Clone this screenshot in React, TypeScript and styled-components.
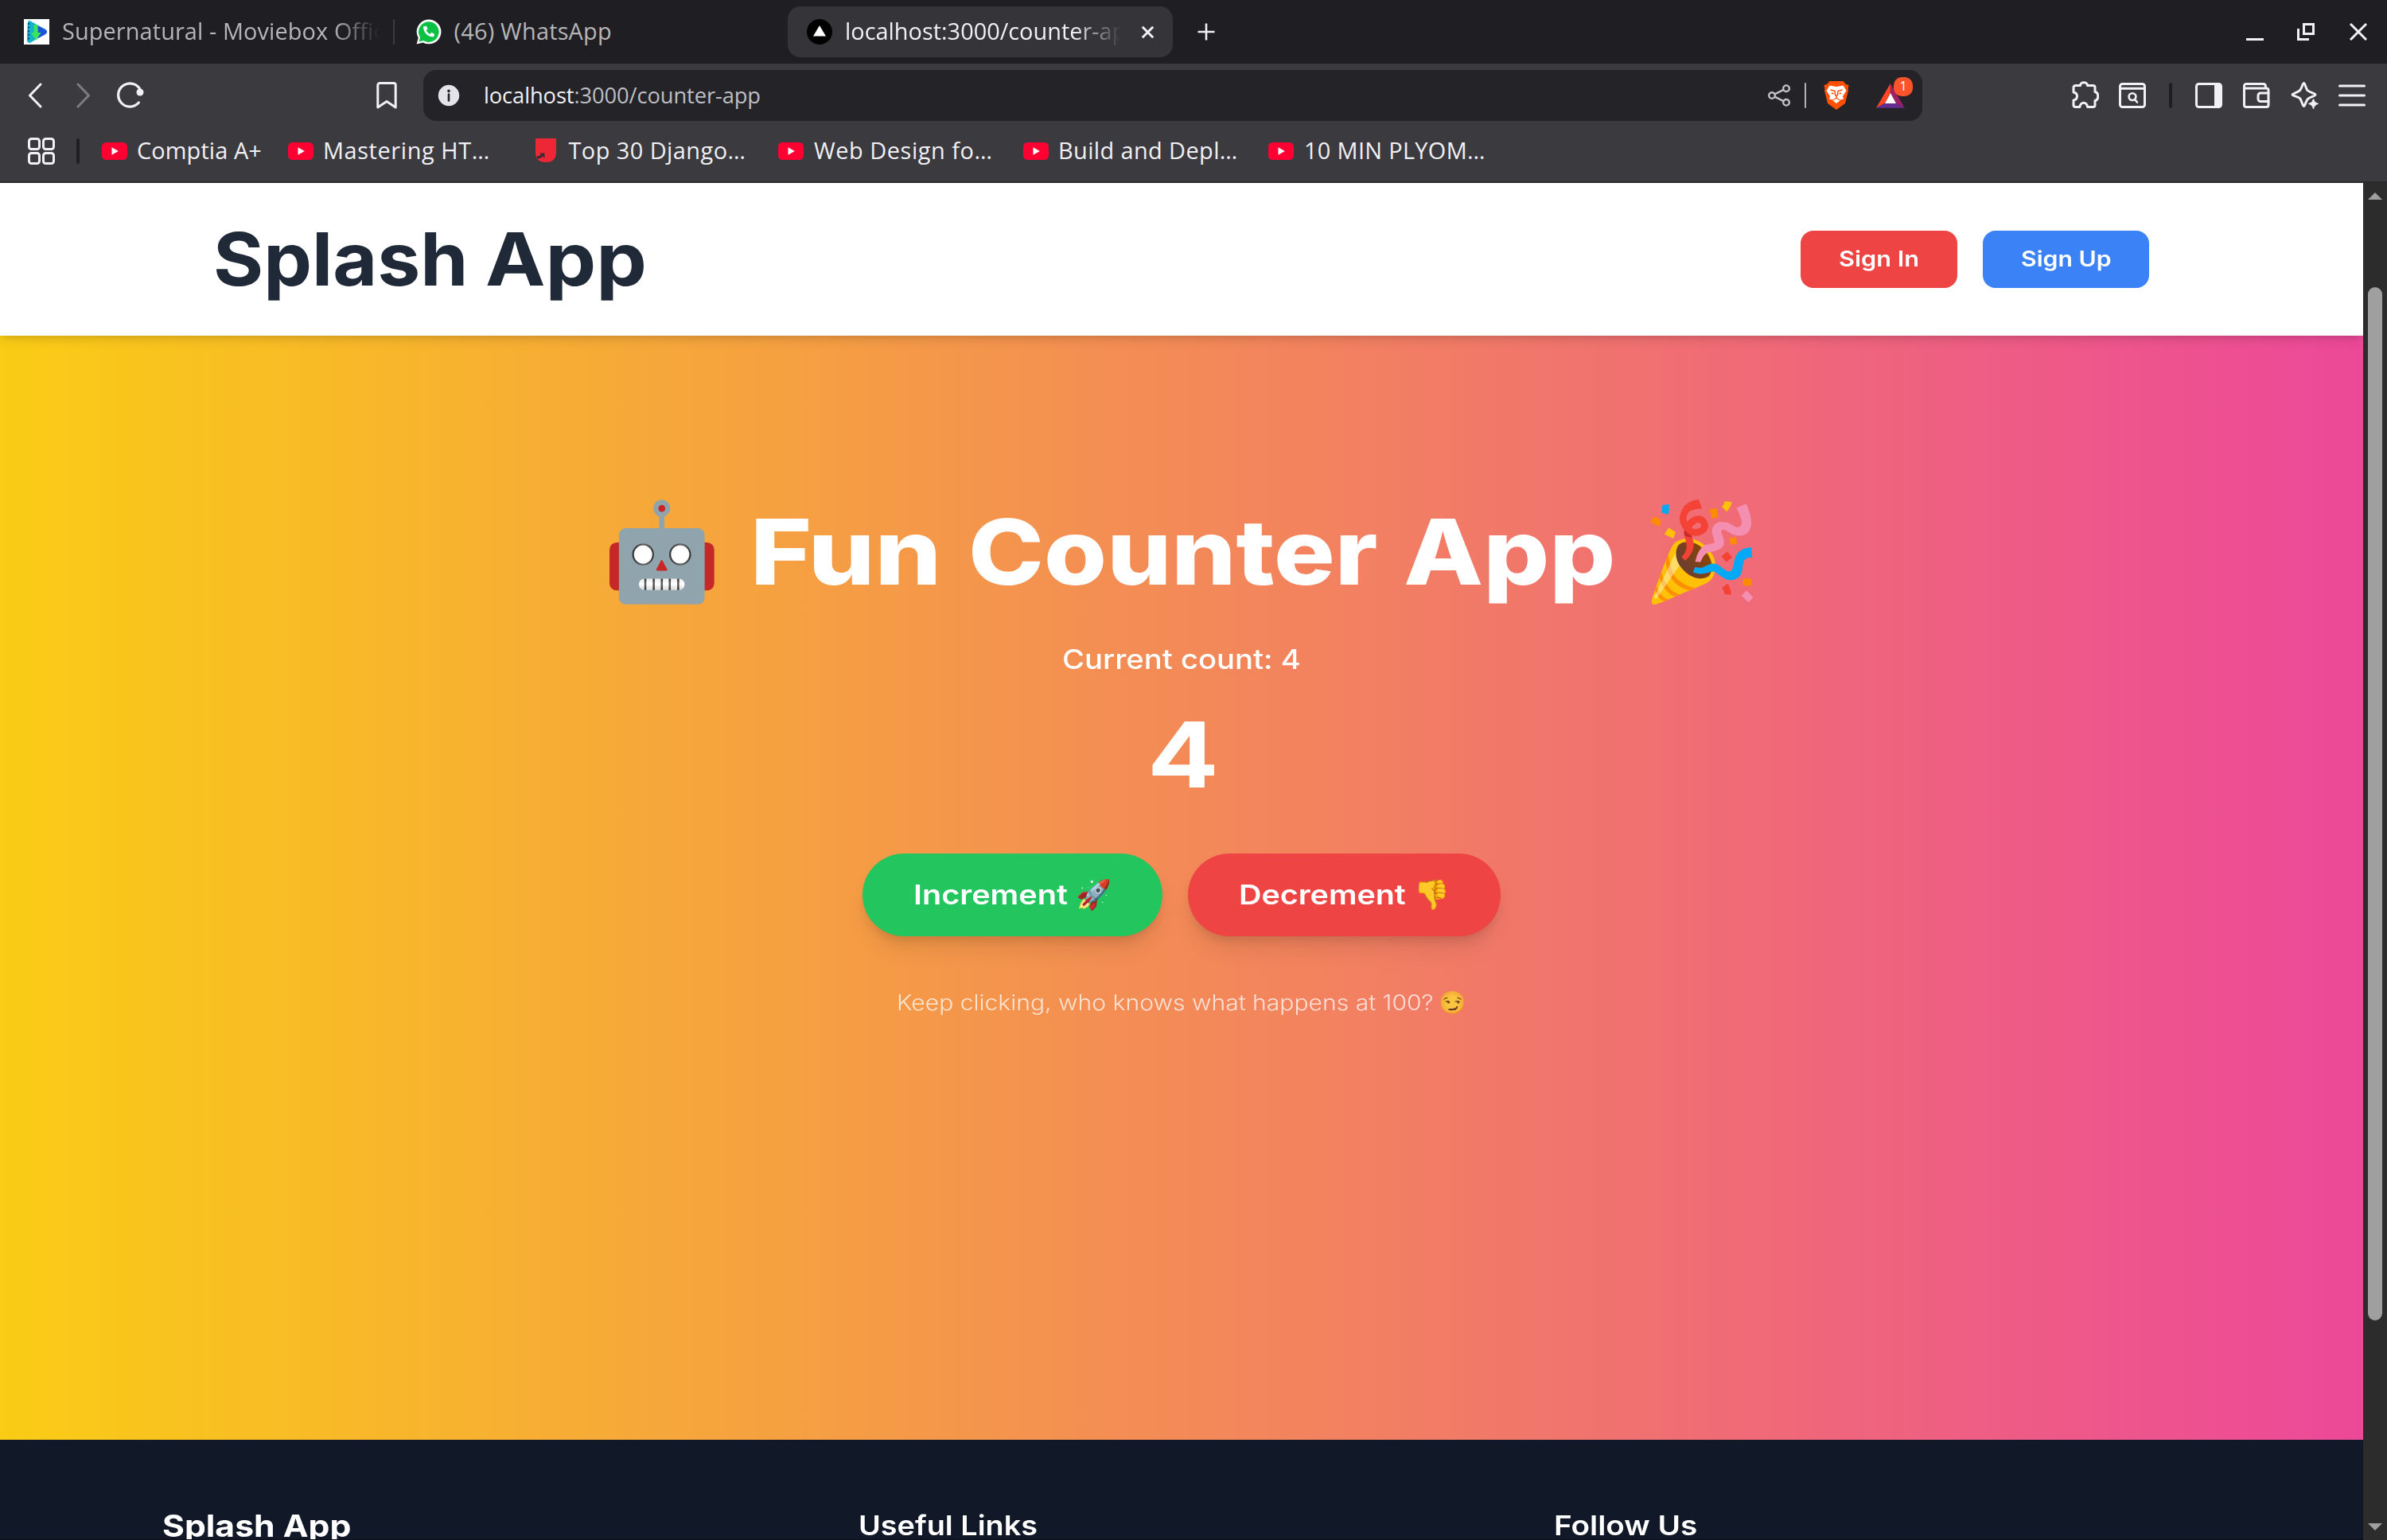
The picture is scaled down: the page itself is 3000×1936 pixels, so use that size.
import React, { useState } from "react";
import styled, { createGlobalStyle } from "styled-components";
import { FaPhoneAlt } from "react-icons/fa";

const Global = createGlobalStyle`
  *, *::before, *::after { box-sizing: border-box; }
  body { margin: 0; overflow: hidden; }
  button { border: 0; padding: 0; margin: 0; background: none; font: inherit; color: inherit; }
  h1, h2, h3, p { margin: 0; font-weight: inherit; }
  svg { display: block; flex-shrink: 0; }
`;

const INK = "#f1f0f5";

const Window = styled.div`
  width: 3000px;
  height: 1936px;
  display: flex;
  flex-direction: column;
  overflow: hidden;
  background: #3b3a3f;
  color: ${INK};
  font-family: "Open Sans", "Noto Sans", sans-serif;
`;

/* ---------- tab strip ---------- */

const TabStrip = styled.div`
  height: 80px;
  flex-shrink: 0;
  display: flex;
  align-items: center;
  background: #1f1e23;
`;

const Tab = styled.div<{ $width: number; $active?: boolean; $pad?: number }>`
  width: ${(p) => p.$width}px;
  height: 64px;
  display: flex;
  align-items: center;
  padding-left: ${(p) => p.$pad ?? 24}px;
  border-radius: 16px;
  background: ${(p) => (p.$active ? "#353439" : "transparent")};
  color: ${(p) => (p.$active ? "#f1f0f5" : "#b6b5b9")};
`;

const Leading = styled.div<{ $width: number }>`
  width: ${(p) => p.$width}px;
`;

const TabTitle = styled.span<{ $width: number; $fade?: number; $spacing?: number }>`
  width: ${(p) => p.$width}px;
  margin: 0 0 2px 16px;
  overflow: hidden;
  white-space: nowrap;
  font-size: 28.9px;
  line-height: 48px;
  letter-spacing: ${(p) => p.$spacing ?? 0}px;
  ${(p) => p.$fade && `mask-image: linear-gradient(90deg, #000 calc(100% - ${p.$fade}px), transparent);`}
`;

const TabDivider = styled.i`
  width: 2px;
  height: 32px;
  background: #3b3a3f;
`;

const IconButton = styled.button<{ $ml?: number; $mt?: number }>`
  display: flex;
  flex-shrink: 0;
  margin-left: ${(p) => p.$ml ?? 0}px;
  margin-top: ${(p) => p.$mt ?? 0}px;
`;

const WindowControls = styled.div`
  display: flex;
  align-items: center;
  margin-left: auto;
  padding-right: 25px;
`;

/* ---------- toolbar ---------- */

const Toolbar = styled.div`
  height: 80px;
  flex-shrink: 0;
  display: flex;
  align-items: center;
  padding: 0 27px 0 35px;
`;

const AddressBar = styled.div`
  width: 1884px;
  height: 64px;
  margin-left: 33px;
  padding: 0 22px 0 18px;
  display: flex;
  align-items: center;
  border-radius: 16px;
  background: #242328;
`;

const Url = styled.span`
  flex: 1;
  margin-left: 30px;
  font-size: 27.3px;
  line-height: 40px;
  letter-spacing: -0.1px;
  color: #bfbec4;
  b { font-weight: 400; color: ${INK}; }
`;

const Rule = styled.i<{ $ml: number; $width?: number; $color?: string }>`
  width: ${(p) => p.$width ?? 4}px;
  height: 32px;
  flex-shrink: 0;
  margin-left: ${(p) => p.$ml}px;
  border-radius: 2px;
  background: ${(p) => p.$color ?? "#1f1e23"};
`;

const Rewards = styled.div`
  position: relative;
  display: flex;
  margin-left: 34px;
`;

const Badge = styled.span`
  position: absolute;
  left: 22px;
  top: -8px;
  width: 24px;
  height: 24px;
  border-radius: 10px;
  background: #fb542b;
  color: #fff;
  text-align: center;
  font: 400 16px/23px "Open Sans", sans-serif;
`;

const ToolbarEnd = styled.div`
  display: flex;
  align-items: center;
  margin-left: auto;
`;

/* ---------- bookmarks ---------- */

const Bookmarks = styled.div`
  height: 70px;
  flex-shrink: 0;
  display: flex;
  align-items: center;
  padding: 0 0 8px 35px;
  border-bottom: 2px solid #2a292e;
`;

const BookmarkList = styled.div`
  display: flex;
  margin-left: 28px;
`;

const BookmarkItem = styled.a<{ $width: number }>`
  width: ${(p) => p.$width}px;
  display: flex;
  align-items: center;
`;

const BookmarkLabel = styled.span<{ $spacing: number; $indent: number }>`
  margin: 0 0 2px ${(p) => p.$indent}px;
  white-space: nowrap;
  font-size: 28.9px;
  line-height: 40px;
  letter-spacing: ${(p) => p.$spacing}px;
`;

/* ---------- page ---------- */

const Viewport = styled.div`
  flex: 1;
  min-height: 0;
  display: flex;
`;

const Page = styled.div`
  width: 2970px;
  overflow: hidden;
  display: flex;
  flex-direction: column;
  font-family: Inter, "Open Sans", sans-serif;
  color: #fff;
`;

const Wide = styled.span<{ $size: number; $weight: number; $width: number; $scale: number; $line: number }>`
  display: block;
  flex-shrink: 0;
  width: ${(p) => p.$width}px;
  white-space: nowrap;
  font-size: ${(p) => p.$size}px;
  font-weight: ${(p) => p.$weight};
  line-height: ${(p) => p.$line}px;
  transform: scaleX(${(p) => p.$scale});
  transform-origin: 0 50%;
`;

const Emoji = styled.span<{ $size: number; $line: number; $ml?: number }>`
  display: block;
  flex-shrink: 0;
  width: ${(p) => p.$size * 1.245}px;
  margin-left: ${(p) => p.$ml ?? 0}px;
  font-size: ${(p) => p.$size}px;
  line-height: ${(p) => p.$line}px;
  font-weight: 400;
  white-space: nowrap;
`;

const Header = styled.header`
  position: relative;
  height: 192px;
  flex-shrink: 0;
  display: flex;
  align-items: center;
  justify-content: space-between;
  padding: 0 269px 0 268px;
  background: #fff;
  color: #1f2937;
  box-shadow: 0 8px 12px -2px rgba(0, 0, 0, 0.1), 0 4px 8px -4px rgba(0, 0, 0, 0.1);
`;

const Brand = styled.h2`
  display: flex;
  gap: 24px;
`;

const AuthButtons = styled.div`
  display: flex;
  gap: 31.6px;
`;

const AuthButton = styled.button<{ $tone: string }>`
  height: 72px;
  display: flex;
  align-items: center;
  padding: 0 48px 2px;
  border-radius: 16px;
  background: ${(p) => p.$tone};
  color: #fff;
  text-align: left;
`;

const Hero = styled.main`
  height: 1388px;
  flex-shrink: 0;
  display: flex;
  flex-direction: column;
  align-items: center;
  padding-top: 210px;
  background: linear-gradient(90deg, #facc15, #ec4899);
`;

const Line = styled.div<{ $height: number; $mt?: number; $opacity?: number }>`
  display: flex;
  align-items: baseline;
  height: ${(p) => p.$height}px;
  margin-top: ${(p) => p.$mt ?? 0}px;
  opacity: ${(p) => p.$opacity ?? 1};
`;

const HeadingText = styled.span`
  display: flex;
  gap: 33.3px;
  margin: 0 33px 0 36.2px;
`;

const Actions = styled.div`
  display: flex;
  gap: 32px;
  margin-top: 64px;
`;

const CountButton = styled.button<{ $tone: string }>`
  height: 104px;
  display: flex;
  align-items: center;
  padding: 0 64px 3px;
  border-radius: 52px;
  background: ${(p) => p.$tone};
  color: #fff;
  text-align: left;
  box-shadow: 0 20px 30px -6px rgba(0, 0, 0, 0.1), 0 8px 12px -4px rgba(0, 0, 0, 0.1);
`;

const Footer = styled.footer`
  flex: 1;
  min-height: 0;
  display: grid;
  grid-template-columns: 875px 874px 874px;
  padding: 80px 0 0 204px;
  overflow: hidden;
  background: #111827;
  border-bottom: 1px solid #0c0f1a;
`;

const Scrollbar = styled.div`
  width: 30px;
  display: flex;
  flex-direction: column;
  align-items: center;
  background: #2c2c2c;
`;

const ScrollArrow = styled.i<{ $down?: boolean }>`
  margin: ${(p) => (p.$down ? "auto 0 12px" : "12px 0 0")};
  border: 9px solid transparent;
  border-top-width: ${(p) => (p.$down ? 9 : 0)}px;
  border-bottom-width: ${(p) => (p.$down ? 0 : 9)}px;
  ${(p) => (p.$down ? "border-top-color" : "border-bottom-color")}: #9f9f9f;
`;

const Thumb = styled.i`
  width: 18px;
  height: 1299px;
  margin-top: 110px;
  border-radius: 9px;
  background: #9f9f9f;
`;

/* ---------- drawings ---------- */

const stroke = { fill: "none", stroke: INK, strokeWidth: 3, strokeLinecap: "round", strokeLinejoin: "round" } as const;

const MovieIcon = () => (
  <svg width="32" height="32" viewBox="0 0 32 32">
    <rect width="32" height="32" fill="#fff" />
    <path d="M5 4Q6 1 9 3L27 13Q31 16 27 19L9 29Q5 31 4 27Z" fill="#1b9fd8" />
    <path d="M17 8L27 13Q31 16 27 19L18 24Z" fill="#1a56d6" />
    <path d="M5 4Q6 1 9 3L12 5V27L9 29Q5 31 4 27Z" fill="#12b3c9" />
    <path d="M6 5V27" stroke="#0a3f7a" strokeWidth="2" strokeDasharray="2 2.6" />
    <path d="M12.5 7H17.5V17H21.5L15 27L9 17H12.5Z" fill="#3be45a" />
  </svg>
);

const WhatsAppIcon = () => (
  <svg width="32" height="32" viewBox="0 0 32 32">
    <path d="M.6 31.5L2.7 23.6A15.4 15.4 0 1 1 8.6 29.4Z" fill="#fff" />
    <path d="M3.6 28.6L5 23A12.8 12.8 0 1 1 9.2 27.1Z" fill="#0bc143" />
    <FaPhoneAlt x="9" y="8.5" size="14" color="#fff" />
  </svg>
);

const NextIcon = () => (
  <svg width="32" height="32" viewBox="0 0 32 32">
    <circle cx="16" cy="16" r="16" fill="#000" />
    <path d="M16 8L24 21.6H8Z" fill="#fff" />
  </svg>
);

const YouTubeIcon = () => (
  <svg width="32" height="32" viewBox="0 0 32 32">
    <rect y="5" width="32" height="22" rx="5.5" fill="#ff0033" />
    <path d="M12.5 11.3V20.7L20.8 16Z" fill="#fff" />
  </svg>
);

const RedBookIcon = () => (
  <svg width="32" height="32" viewBox="0 0 32 32">
    <path d="M3 0H29V17Q29 30 16 30Q3 30 3 17Z" fill="#ee2737" />
    <path d="M5 25Q9 26 12.5 22.5L14.5 25V18.5H8L10 20.6Q8 23 5 22Z" fill="#3b2a30" />
  </svg>
);

const Chevron = ({ right }: { right?: boolean }) => (
  <svg width="18" height="32" viewBox="0 0 18 32">
    <path d={right ? "M2 2L15.5 16L2 30" : "M16 2L2.5 16L16 30"} {...stroke} stroke={right ? "#7d7c81" : INK} />
  </svg>
);

const ReloadIcon = () => (
  <svg width="36" height="34" viewBox="0 0 36 34">
    <path d="M30.6 11.5A14.6 14.6 0 1 0 28.3 27" {...stroke} strokeWidth="3.2" />
    <circle cx="30" cy="14" r="4.5" fill={INK} />
  </svg>
);

const BookmarkIcon = () => (
  <svg width="26" height="34" viewBox="0 0 26 34">
    <path d="M1.8 4A2.4 2.4 0 0 1 4.2 1.6H21.8A2.4 2.4 0 0 1 24.2 4V32L13 24.5L1.8 32Z" {...stroke} />
  </svg>
);

const InfoIcon = () => (
  <svg width="28" height="28" viewBox="0 0 28 28">
    <circle cx="14" cy="14" r="13.2" fill="#e4e3e9" />
    <circle cx="14" cy="8.4" r="1.8" fill="#242328" />
    <path d="M14 12.5V20.5" stroke="#242328" strokeWidth="2.6" strokeLinecap="round" />
  </svg>
);

const ShareIcon = () => (
  <svg width="28" height="28" viewBox="0 0 28 28">
    <g fill="none" stroke="#c3c2c8" strokeWidth="2.4">
      <circle cx="5" cy="14" r="3.8" />
      <circle cx="23" cy="5.2" r="3.8" />
      <circle cx="23" cy="22.8" r="3.8" />
      <path d="M8.5 12.3L19.5 6.9M8.5 15.7L19.5 21.1" />
    </g>
  </svg>
);

const BraveIcon = () => (
  <svg width="32" height="36" viewBox="0 0 32 36">
    <path d="M7.5 0H24.5L28 4L31.5 5L30.5 10L31 12L27 28L16 36L5 28L1 12L1.5 10L.5 5L4 4Z" fill="#ff4f00" />
    <path d="M7.5 5.5L16 7L24.5 5.5L28.5 12L24 19L25 22.5L20.5 23.5L16 20.5L11.5 23.5L7 22.5L8 19L3.5 12Z" fill="#fff" />
    <path d="M8.5 11L14 12.3L14.6 17.6L16 18.8L17.4 17.6L18 12.3L23.5 11M10 15L12.5 16M22 15L19.5 16M16 19V21" fill="none" stroke="#ff4f00" strokeWidth="1.5" />
    <path d="M11.5 24.5L16 22L20.5 24.5L16 28Z" fill="#fff" />
  </svg>
);

const BatIcon = () => (
  <svg width="36" height="31" viewBox="0 0 36 31">
    <path d="M17.8 0V12L11 24.7L0 30.7Z" fill="#ff4724" />
    <path d="M17.8 0L35.8 30.7L25 24.7L17.8 12Z" fill="#9e1f63" />
    <path d="M0 30.7L11 24.7H25L35.8 30.7Z" fill="#662d91" />
    <path d="M18 12L25 24.9H11Z" fill="#fff" />
  </svg>
);

const PuzzleIcon = () => (
  <svg width="34" height="34" viewBox="0 0 34 34">
    <path
      d="M2 14V8A2.5 2.5 0 0 1 4.5 5.5H10.5C10.5.5 19.5.5 19.5 5.5H26.5A2.5 2.5 0 0 1 29 8V13.5C34 14.5 34 23.5 29 24.5V30A2.5 2.5 0 0 1 26.5 32.5H19.5C19 25.5 10.5 25.5 10 32.5H4.5A2.5 2.5 0 0 1 2 30V24C8 23 8 15 2 14Z"
      {...stroke}
    />
  </svg>
);

const FindIcon = () => (
  <svg width="34" height="34" viewBox="0 0 34 34">
    <rect x="1.5" y="2.5" width="31" height="29" rx="3" {...stroke} />
    <path d="M2 8.2H32" {...stroke} />
    <circle cx="17" cy="18.6" r="4.4" {...stroke} strokeWidth="2.6" />
    <path d="M20 22L23 25.5" {...stroke} strokeWidth="2.6" />
  </svg>
);

const SidebarIcon = () => (
  <svg width="34" height="34" viewBox="0 0 34 34">
    <rect x="1.5" y="2.5" width="31" height="29" rx="3" {...stroke} />
    <path d="M24 2.5H31.5V31.5H24Z" fill={INK} />
  </svg>
);

const WalletIcon = () => (
  <svg width="34" height="34" viewBox="0 0 34 34">
    <path d="M1.5 8V5A2.5 2.5 0 0 1 4 2.5H25.5Q28.5 2.5 28.5 6V8M1.5 8H29.5A2.5 2.5 0 0 1 32 10.5V29A2.5 2.5 0 0 1 29.5 31.5H4A2.5 2.5 0 0 1 1.5 29Z" {...stroke} />
    <path d="M32 14H22A3 3 0 0 0 19 17V21.5A3 3 0 0 0 22 24.5H32" {...stroke} />
  </svg>
);

const SparkleIcon = () => (
  <svg width="36" height="36" viewBox="0 0 36 36">
    <path d="M16.5 2.5C18 2.5 18.8 8 20.4 10.8C22.6 14.2 31 15.5 31 17C31 18.6 25.5 19.5 22 22C19 24.2 18 31.5 16.5 31.5C15 31.5 14 25 11.8 22C9.6 19.2 2 18.5 2 17C2 15.4 9.2 14.4 11.6 11.6C14 8.8 15 2.5 16.5 2.5Z" {...stroke} />
    <path d="M28.5 22.5Q29.5 27.5 34.5 28.5Q29.5 29.5 28.5 35Q27.5 29.5 22.5 28.5Q27.5 27.5 28.5 22.5Z" fill={INK} stroke={INK} strokeWidth="1" />
  </svg>
);

const MenuIcon = () => (
  <svg width="34" height="34" viewBox="0 0 34 34">
    <path d="M1.5 5H32.5M1.5 17H32.5M1.5 29H32.5" {...stroke} />
  </svg>
);

const GridIcon = () => (
  <svg width="34" height="34" viewBox="0 0 34 34">
    {[1.5, 19.5].map((x) => [1.5, 19.5].map((y) => <rect key={`${x}-${y}`} x={x} y={y} width="13" height="13" rx="3" {...stroke} />))}
  </svg>
);

const bookmarks = [
  { label: "Comptia A+", width: 234, spacing: 0.1, indent: 12 },
  { label: "Mastering HT…", width: 307.5, spacing: 0.6, indent: 12 },
  { label: "Top 30 Django…", width: 308.5, spacing: 0.45, indent: 13, book: true },
  { label: "Web Design fo…", width: 308, spacing: 0.55, indent: 13 },
  { label: "Build and Depl…", width: 308, spacing: 0.4, indent: 12 },
  { label: "10 MIN PLYOM…", width: 308, spacing: 0.34, indent: 13 },
];

export default function App() {
  const [count, setCount] = useState(4);
  return (
    <>
      <Global />
      <Window>
        <TabStrip>
          <Leading $width={6} />
          <Tab $width={488}>
            <MovieIcon />
            <TabTitle $width={399} $fade={58} $spacing={0.1}>Supernatural - Moviebox Official</TabTitle>
          </Tab>
          <TabDivider />
          <Tab $width={494} $pad={26.5}>
            <WhatsAppIcon />
            <TabTitle $width={300} $spacing={0.2}>(46) WhatsApp</TabTitle>
          </Tab>
          <Tab $width={484} $active>
            <NextIcon />
            <TabTitle $width={347} $fade={60}>localhost:3000/counter-app</TabTitle>
            <IconButton $ml={25}>
              <svg width="17" height="17" viewBox="0 0 17 17"><path d="M1.8 1.8L15.2 15.2M15.2 1.8L1.8 15.2" {...stroke} strokeLinecap="butt" /></svg>
            </IconButton>
          </Tab>
          <IconButton $ml={31}>
            <svg width="22" height="22" viewBox="0 0 22 22"><path d="M11 .5V21.5M.5 11H21.5" {...stroke} strokeWidth="2.6" strokeLinecap="butt" /></svg>
          </IconButton>
          <WindowControls>
            <svg width="22" height="22" viewBox="0 0 22 22"><path d="M0 20.5H22" {...stroke} strokeLinecap="butt" /></svg>
            <IconButton $ml={42}>
              <svg width="22" height="22" viewBox="0 0 22 22"><path d="M8.5 1.5H20.5V13.5H8.5ZM1.5 7V20.5H15" {...stroke} strokeLinecap="butt" strokeLinejoin="miter" /></svg>
            </IconButton>
            <IconButton $ml={44}>
              <svg width="22" height="22" viewBox="0 0 22 22"><path d="M1 1L21 21M21 1L1 21" {...stroke} strokeLinecap="butt" /></svg>
            </IconButton>
          </WindowControls>
        </TabStrip>

        <Toolbar>
          <IconButton><Chevron /></IconButton>
          <IconButton $ml={43}><Chevron right /></IconButton>
          <IconButton $ml={32} $mt={-2}><ReloadIcon /></IconButton>
          <IconButton $ml={291}><BookmarkIcon /></IconButton>
          <AddressBar>
            <InfoIcon />
            <Url><b>localhost</b>:3000/counter-app</Url>
            <IconButton><ShareIcon /></IconButton>
            <Rule $ml={18} $width={2} $color="#b3b2b8" />
            <IconButton $ml={22}><BraveIcon /></IconButton>
            <Rewards><BatIcon /><Badge>1</Badge></Rewards>
          </AddressBar>
          <ToolbarEnd>
            <IconButton $mt={-3}><PuzzleIcon /></IconButton>
            <IconButton $ml={25}><FindIcon /></IconButton>
            <Rule $ml={29} />
            <IconButton $ml={29}><SidebarIcon /></IconButton>
            <IconButton $ml={26}><WalletIcon /></IconButton>
            <IconButton $ml={26}><SparkleIcon /></IconButton>
            <IconButton $ml={24}><MenuIcon /></IconButton>
          </ToolbarEnd>
        </Toolbar>

        <Bookmarks>
          <IconButton><GridIcon /></IconButton>
          <Rule $ml={27} />
          <BookmarkList>
            {bookmarks.map((b) => (
              <BookmarkItem key={b.label} $width={b.width}>
                {b.book ? <RedBookIcon /> : <YouTubeIcon />}
                <BookmarkLabel $spacing={b.spacing} $indent={b.indent}>{b.label}</BookmarkLabel>
              </BookmarkItem>
            ))}
          </BookmarkList>
        </Bookmarks>

        <Viewport>
          <Page>
            <Header>
              <Brand>
                <Wide $size={91.5} $weight={700} $width={318} $scale={1.055} $line={118}>Splash</Wide>{" "}
                <Wide $size={91.5} $weight={700} $width={204} $scale={1.105} $line={118}>App</Wide>
              </Brand>
              <AuthButtons>
                <AuthButton $tone="#ef4444"><Wide $size={26.7} $weight={600} $width={101.2} $scale={1.15} $line={40}>Sign In</Wide></AuthButton>
                <AuthButton $tone="#3b82f6"><Wide $size={26.7} $weight={600} $width={113.4} $scale={1.132} $line={40}>Sign Up</Wide></AuthButton>
              </AuthButtons>
            </Header>
            <Hero>
              <Line as="h1" $height={120}>
                <Emoji $size={120} $line={120}>🤖</Emoji>
                <HeadingText>
                  <Wide $size={114.4} $weight={800} $width={241} $scale={1.152} $line={120}>Fun</Wide>{" "}
                  <Wide $size={114.4} $weight={800} $width={513.5} $scale={1.117} $line={120}>Counter</Wide>{" "}
                  <Wide $size={114.4} $weight={800} $width={267} $scale={1.139} $line={120}>App</Wide>
                </HeadingText>
                <Emoji $size={120} $line={120}>🎉</Emoji>
              </Line>
              <Line as="p" $height={56} $mt={49}>
                <Wide $size={34.3} $weight={500} $width={300} $scale={1.114} $line={56}>Current count: {count}</Wide>
              </Line>
              <Line $height={120} $mt={32}>
                <Wide $size={114.4} $weight={700} $width={87} $scale={1.162} $line={120}>{count}</Wide>
              </Line>
              <Actions>
                <CountButton $tone="#22c55e" onClick={() => setCount(count + 1)}>
                  <Line as="span" $height={56}>
                    <Wide $size={34.3} $weight={600} $width={194} $scale={1.155} $line={56}>Increment</Wide>
                    <Emoji $size={36} $line={56} $ml={10.2}>🚀</Emoji>
                  </Line>
                </CountButton>
                <CountButton $tone="#ef4444" onClick={() => setCount(count - 1)}>
                  <Line as="span" $height={56}>
                    <Wide $size={34.3} $weight={600} $width={210} $scale={1.15} $line={56}>Decrement</Wide>
                    <Emoji $size={36} $line={56} $ml={10.6}>👎</Emoji>
                  </Line>
                </CountButton>
              </Actions>
              <Line as="p" $height={40} $mt={63} $opacity={0.74}>
                <Wide $size={26.7} $weight={300} $width={674.7} $scale={1.127} $line={40}>Keep clicking, who knows what happens at 100?</Wide>
                <Emoji $size={28} $line={40} $ml={6.8}>😏</Emoji>
              </Line>
            </Hero>
            <Footer>
              <Wide as="h3" $size={38.1} $weight={700} $width={238} $scale={1.12} $line={56}>Splash App</Wide>
              <Wide as="h3" $size={34.3} $weight={600} $width={225} $scale={1.103} $line={56}>Useful Links</Wide>
              <Wide as="h3" $size={34.3} $weight={600} $width={181} $scale={1.128} $line={56}>Follow Us</Wide>
            </Footer>
          </Page>
          <Scrollbar>
            <ScrollArrow />
            <Thumb />
            <ScrollArrow $down />
          </Scrollbar>
        </Viewport>
      </Window>
    </>
  );
}
